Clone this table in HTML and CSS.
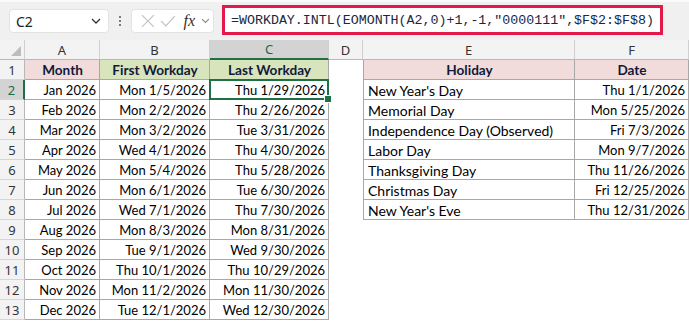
FILE: index.html
```html
<!DOCTYPE html>
<html>
<head>
<meta charset="utf-8">
<link rel="stylesheet" href="styles.css">
</head>
<body>
<div class="bar">
  <div class="namebox"><span>C2</span>
    <svg class="chev" width="10" height="6" viewBox="0 0 10 6"><path d="M1 1 L5 5 L9 1" fill="none" stroke="#333" stroke-width="1.3"/></svg>
  </div>
  <div class="dots"><i></i><i></i><i></i></div>
  <div class="fxbox">
    <svg width="14" height="14" viewBox="0 0 14 14"><path d="M1 1 L13 13 M13 1 L1 13" stroke="#c4c4c4" stroke-width="1.3" fill="none"/></svg>
    <svg width="16" height="14" viewBox="0 0 16 14"><path d="M1 7 L6 12 L15 2" stroke="#c4c4c4" stroke-width="1.3" fill="none"/></svg>
    <span class="fx">fx</span>
    <svg width="9" height="6" viewBox="0 0 9 6"><path d="M1 1 L4.5 4.5 L8 1" fill="none" stroke="#888" stroke-width="1.1"/></svg>
  </div>
  <div class="formula">=WORKDAY.INTL(EOMONTH(A2,0)+1,-1,"0000111",$F$2:$F$8)</div>
</div>
<div class="grid">
  <div class="ch corner"><svg width="10" height="10" viewBox="0 0 10 10"><path d="M10 0 L10 10 L0 10 Z" fill="#bdbdbd"/></svg></div>
  <div class="ch">A</div><div class="ch">B</div><div class="ch sel">C</div><div class="ch">D</div><div class="ch">E</div><div class="ch">F</div>

  <div class="rh">1</div>
  <div class="c hd pink">Month</div><div class="c hd green">First Workday</div><div class="c hd green">Last Workday</div>
  <div class="e"></div><div class="c hd pink lb">Holiday</div><div class="c hd pink">Date</div>

  <div class="rh rsel">2</div>
  <div class="c r">Jan 2026</div><div class="c r">Mon 1/5/2026</div><div class="c r active">Thu 1/29/2026</div>
  <div class="e"></div><div class="c lb">New Year's Day</div><div class="c r">Thu 1/1/2026</div>

  <div class="rh">3</div>
  <div class="c r">Feb 2026</div><div class="c r">Mon 2/2/2026</div><div class="c r">Thu 2/26/2026</div>
  <div class="e"></div><div class="c lb">Memorial Day</div><div class="c r">Mon 5/25/2026</div>

  <div class="rh">4</div>
  <div class="c r">Mar 2026</div><div class="c r">Mon 3/2/2026</div><div class="c r">Tue 3/31/2026</div>
  <div class="e"></div><div class="c lb">Independence Day (Observed)</div><div class="c r">Fri 7/3/2026</div>

  <div class="rh">5</div>
  <div class="c r">Apr 2026</div><div class="c r">Wed 4/1/2026</div><div class="c r">Thu 4/30/2026</div>
  <div class="e"></div><div class="c lb">Labor Day</div><div class="c r">Mon 9/7/2026</div>

  <div class="rh">6</div>
  <div class="c r">May 2026</div><div class="c r">Mon 5/4/2026</div><div class="c r">Thu 5/28/2026</div>
  <div class="e"></div><div class="c lb">Thanksgiving Day</div><div class="c r">Thu 11/26/2026</div>

  <div class="rh">7</div>
  <div class="c r">Jun 2026</div><div class="c r">Mon 6/1/2026</div><div class="c r">Tue 6/30/2026</div>
  <div class="e"></div><div class="c lb">Christmas Day</div><div class="c r">Fri 12/25/2026</div>

  <div class="rh">8</div>
  <div class="c r">Jul 2026</div><div class="c r">Wed 7/1/2026</div><div class="c r">Thu 7/30/2026</div>
  <div class="e"></div><div class="c lb">New Year's Eve</div><div class="c r">Thu 12/31/2026</div>

  <div class="rh">9</div>
  <div class="c r">Aug 2026</div><div class="c r">Mon 8/3/2026</div><div class="c r">Mon 8/31/2026</div>
  <div class="e"></div><div class="e"></div><div class="e"></div>

  <div class="rh">10</div>
  <div class="c r">Sep 2026</div><div class="c r">Tue 9/1/2026</div><div class="c r">Wed 9/30/2026</div>
  <div class="e"></div><div class="e"></div><div class="e"></div>

  <div class="rh">11</div>
  <div class="c r">Oct 2026</div><div class="c r">Thu 10/1/2026</div><div class="c r">Thu 10/29/2026</div>
  <div class="e"></div><div class="e"></div><div class="e"></div>

  <div class="rh">12</div>
  <div class="c r">Nov 2026</div><div class="c r">Mon 11/2/2026</div><div class="c r">Mon 11/30/2026</div>
  <div class="e"></div><div class="e"></div><div class="e"></div>

  <div class="rh">13</div>
  <div class="c r">Dec 2026</div><div class="c r">Tue 12/1/2026</div><div class="c r">Wed 12/30/2026</div>
  <div class="e"></div><div class="e"></div><div class="e"></div>
</div>
</body>
</html>
```
FILE: styles.css
```css
* { box-sizing: border-box; }
html, body { margin: 0; padding: 0; background: #fff; }
body { width: 689px; height: 322px; overflow: hidden; font-family: "Noto Sans", sans-serif; }

.bar {
  height: 40px;
  background: #f0f0f0;
  border-top: 2px solid #fafafa;
  display: flex;
  align-items: center;
  padding-left: 9px;
}
.namebox {
  width: 100px; height: 24px;
  background: #fff;
  border-radius: 4px;
  border: 1px solid #e3e3e3;
  display: flex; align-items: center; justify-content: space-between;
  padding: 0 7px 0 6px;
  font-size: 14px; color: #222;
}
.dots { width: 22px; display: flex; flex-direction: column; align-items: center; gap: 2px; }
.dots i { display: block; width: 2px; height: 2px; background: #555; border-radius: 1px; }
.fxbox {
  width: 83px; height: 24px;
  background: #fff;
  border-radius: 4px;
  border: 1px solid #e3e3e3;
  display: flex; align-items: center;
  padding: 0 3px 0 9px;
  gap: 5px;
}
.fx { font-family: "Liberation Serif", serif; font-style: italic; font-size: 16px; color: #333; margin-left: 3px; margin-right: 1px; }
.formula {
  margin-left: 8px;
  width: 441px; height: 30px;
  margin-top: -2px;
  border: 3px solid #e3194b;
  background: #fff;
  font-family: "Liberation Mono", monospace;
  font-size: 13.3px;
  color: #1b2740;
  display: flex; align-items: center;
  padding-left: 6px;
  white-space: nowrap;
}

.grid {
  display: grid;
  grid-template-columns: 25px 75px 110px 119px 34px 212px 114px;
  grid-auto-rows: 20px;
}
.ch {
  background: #f3f3f3;
  border-right: 1px solid #d0d0d0;
  border-bottom: 1px solid #b8b8b8;
  font-family: "Noto Sans", sans-serif;
  font-size: 13px; color: #333;
  display: flex; align-items: center; justify-content: center;
}
.ch.sel { background: #d3d3d3; color: #1d6b40; border-bottom: 2px solid #1e7145; }
.corner { justify-content: flex-end; align-items: flex-end; padding: 0 3px 3px 0; }
.rh {
  background: #f3f3f3;
  border-right: 1px solid #b8b8b8;
  border-bottom: 1px solid #d6d6d6;
  font-family: "Noto Sans", sans-serif;
  font-size: 13px; color: #333;
  display: flex; align-items: center; justify-content: center;
}
.rh.rsel { background: #d3d3d3; color: #1d6b40; border-right: 2px solid #1e7145; }

.c {
  border-right: 1px solid #a8a8a8;
  border-bottom: 1px solid #a8a8a8;
  font-family: "Lato", sans-serif;
  font-size: 14px;
  color: #000;
  display: flex; align-items: center;
  padding: 1px 3px 0 4px;
  white-space: nowrap;
}
.c.r { justify-content: flex-end; font-size: 13px; }
.c.lb { border-left: 1px solid #a8a8a8; }
.c.hd { justify-content: center; font-weight: bold; font-size: 13.6px; color: #101a3a; }
.pink { background: #f2dcdb; }
.green { background: #d8e4bc; }
.active { position: relative; }
.active::after {
  content: "";
  position: absolute;
  left: -1px; top: -1px; right: -1px; bottom: -1px;
  border: 2px solid #1e7145;
}
.active::before {
  content: "";
  position: absolute;
  right: -4px; bottom: -4px;
  width: 6px; height: 6px;
  background: #1e7145;
  border: 1px solid #fff;
  z-index: 2;
}
```
